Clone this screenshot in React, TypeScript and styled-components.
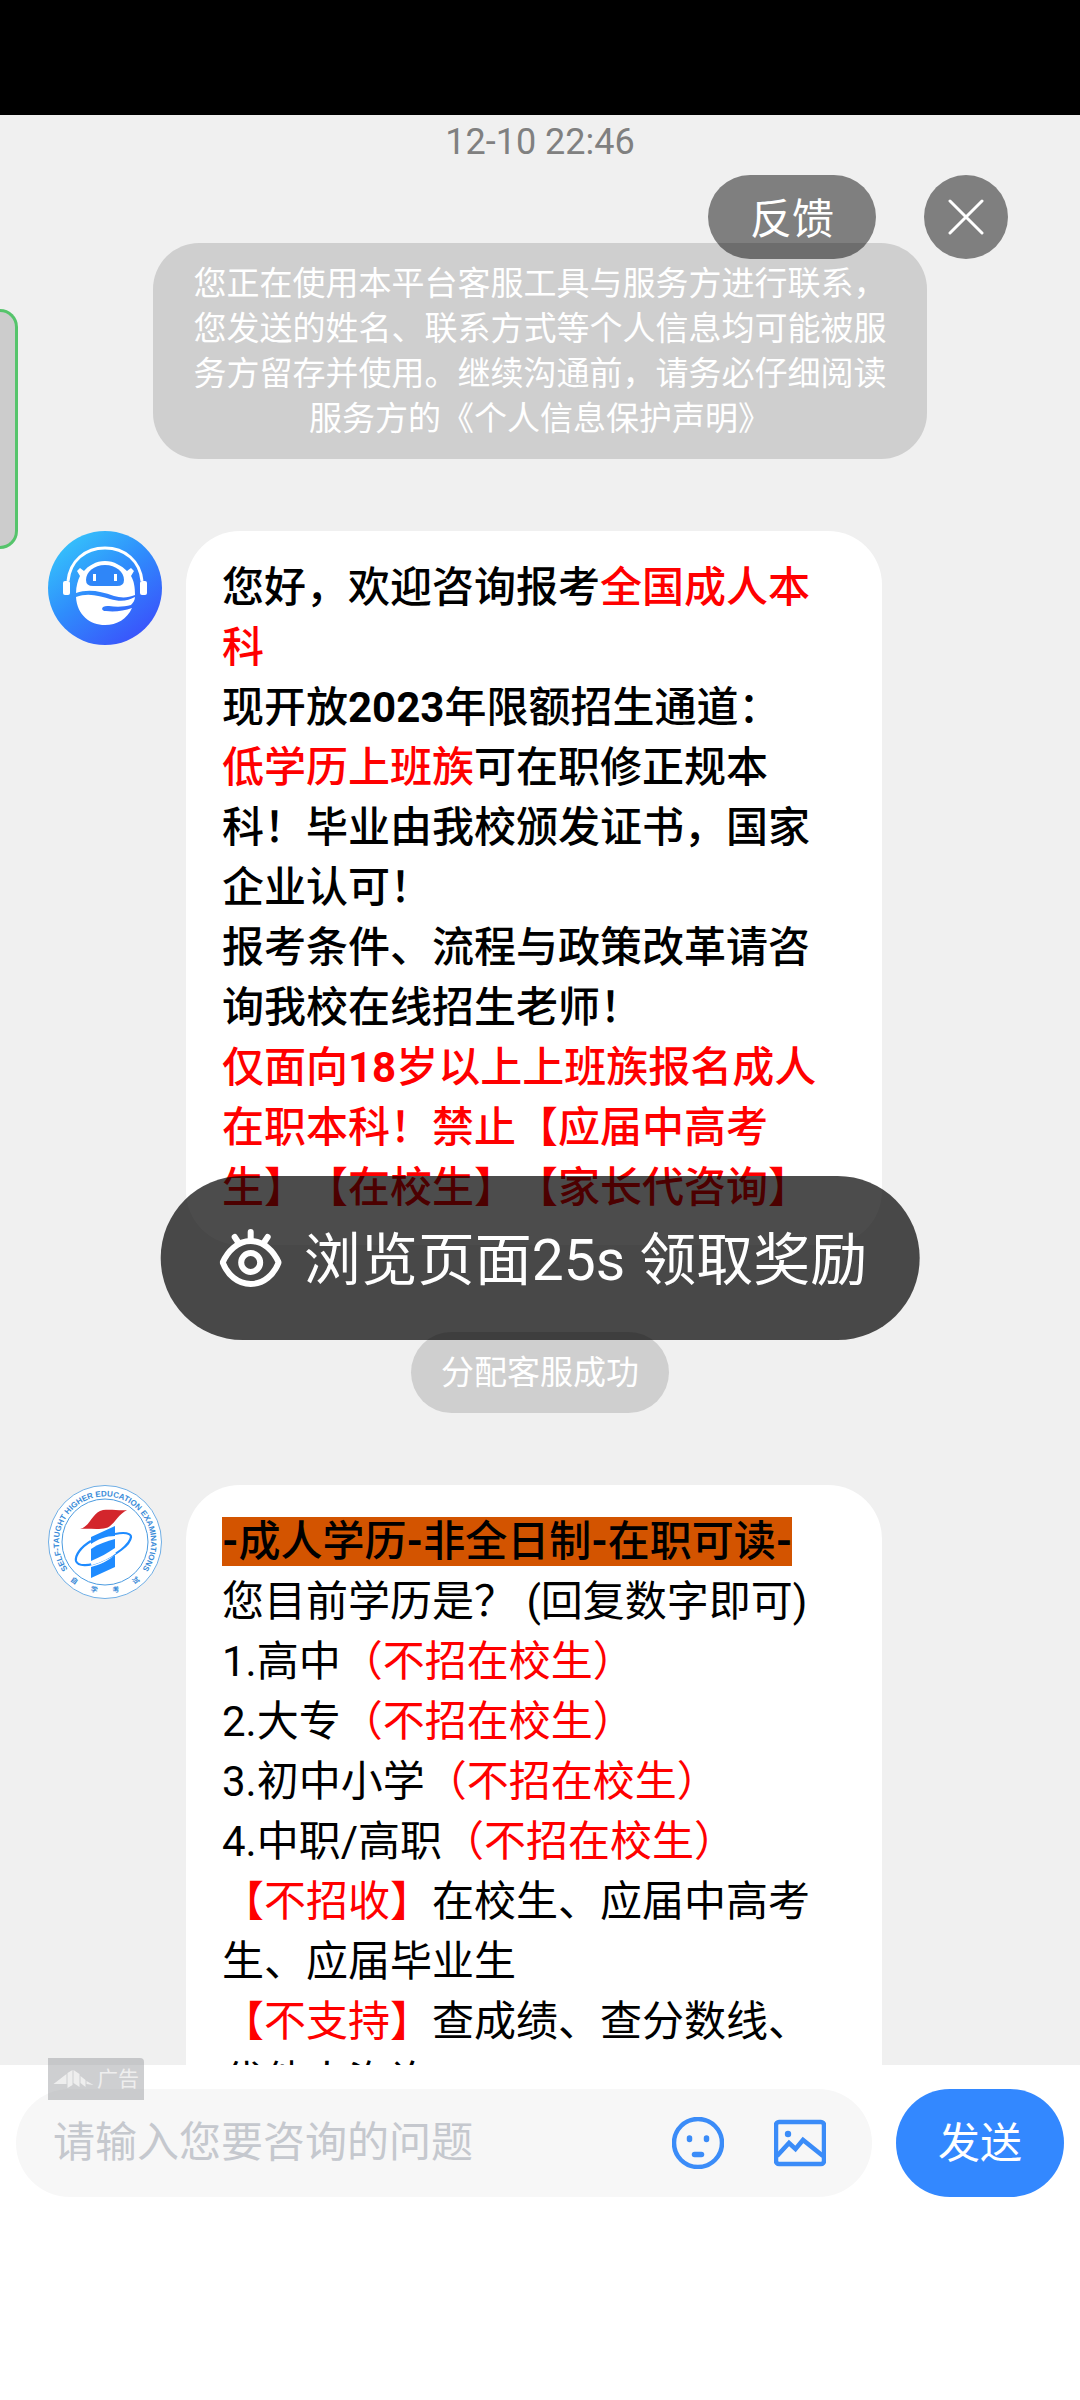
import React from "react";
import styled, { createGlobalStyle, css } from "styled-components";

const GlobalStyle = createGlobalStyle`
  * { box-sizing: border-box; }
  body {
    margin: 0;
    background: #fff;
    font-family: Roboto, "Noto Sans CJK SC", sans-serif;
    text-spacing-trim: space-all;
  }
  button, input { font-family: inherit; }
  button { border: 0; padding: 0; cursor: pointer; }
`;

const Screen = styled.div`
  position: relative;
  display: flex;
  flex-direction: column;
  height: 100vh;
  overflow: hidden;
  background: #fff;
`;

const StatusBar = styled.div`
  flex: none;
  height: 115px;
  background: #000;
`;

const Chat = styled.main`
  flex: 1;
  min-height: 0;
  overflow: hidden;
  display: flex;
  flex-direction: column;
  align-items: center;
  background: #f0f0f0;
`;

const Timestamp = styled.time`
  margin-top: 5px;
  font-size: 36px;
  line-height: 44px;
  color: #808080;
`;

const Notice = styled.p<{ $gap: number }>`
  flex: none;
  max-width: 774px;
  margin: ${(p) => p.$gap}px 0 0;
  padding: 18px 30px;
  border-radius: 46px;
  background: #cfcfcf;
  color: #fff;
  font-size: 33px;
  line-height: 45px;
  text-align: center;
`;

const Message = styled.article`
  flex: none;
  align-self: stretch;
  display: flex;
  align-items: flex-start;
  gap: 24px;
  margin-top: 72px;
  padding: 0 198px 0 48px;
`;

const Avatar = styled.svg`
  flex: none;
  width: 114px;
  height: 114px;
`;

const Bubble = styled.div<{ $strong?: boolean }>`
  flex: 1;
  padding: 27px 36px;
  border-radius: 54px;
  background: #fff;
  color: #000;
  font-size: 42px;
  line-height: 60px;
  ${(p) => p.$strong && css`font-weight: 500;`}
`;

const Line = styled.p`
  margin: 0;
`;

const Red = styled.span`
  color: #f00;
`;

const Heavy = styled.b`
  font-weight: 700;
`;

const Mark = styled.mark`
  background: #d35400;
  color: #000;
  font-weight: 500;
`;

const Composer = styled.form`
  flex: none;
  position: relative;
  display: flex;
  align-items: flex-start;
  gap: 24px;
  height: 335px;
  padding: 24px 16px;
  background: #fff;
`;

const Field = styled.div`
  flex: 1;
  min-width: 0;
  display: flex;
  align-items: center;
  gap: 50px;
  height: 108px;
  padding: 0 46px 0 37px;
  border-radius: 54px;
  background: #f7f7f7;
`;

const TextInput = styled.input`
  flex: 1;
  min-width: 0;
  padding: 0;
  border: 0;
  outline: 0;
  background: none;
  font-size: 42px;
  line-height: 60px;
  color: #000;
  &::placeholder { color: #c5c8ce; opacity: 1; }
`;

const IconButton = styled.button`
  display: flex;
  background: none;
  svg { width: 52px; height: 52px; }
`;

const SendButton = styled.button`
  flex: none;
  height: 108px;
  padding: 0 42px 8px;
  border-radius: 54px;
  background: #3388ff;
  color: #fff;
  font-size: 42px;
`;

const AdBadge = styled.span`
  position: absolute;
  left: 48px;
  top: -7px;
  display: flex;
  align-items: center;
  gap: 3px;
  height: 42px;
  padding: 0 5px;
  border-radius: 0 4px 0 0;
  background: rgba(152, 154, 158, 0.48);
  color: #eee;
  font-size: 21px;
  line-height: 24px;
  svg { width: 41px; height: 20px; }
`;

const TopActions = styled.div`
  position: absolute;
  top: 175px;
  right: 72px;
  display: flex;
  gap: 48px;
`;

const Pill = styled.button<{ $round?: boolean }>`
  display: flex;
  align-items: center;
  justify-content: center;
  width: ${(p) => (p.$round ? 84 : 168)}px;
  height: 84px;
  padding-top: ${(p) => (p.$round ? 0 : 5)}px;
  border-radius: 42px;
  background: rgba(0, 0, 0, 0.47);
  color: #fff;
  font-size: 42px;
  line-height: 60px;
  svg { width: 36px; height: 36px; }
`;

const SideTab = styled.aside`
  position: absolute;
  top: 309px;
  left: 0;
  width: 18px;
  height: 240px;
  border: 3px solid #55c46b;
  border-left: 0;
  border-radius: 0 18px 18px 0;
  background: #ccc;
`;

const Toast = styled.div`
  position: absolute;
  top: 1176px;
  left: 50%;
  transform: translateX(-50%);
  display: flex;
  align-items: center;
  gap: 22px;
  height: 164px;
  padding: 0 52px 0 59px;
  border-radius: 82px;
  background: rgba(0, 0, 0, 0.7);
  color: #fff;
  font-size: 57px;
  line-height: 80px;
  white-space: nowrap;
  svg { flex: none; width: 62px; height: 62px; }
`;

const ToastText = styled.span`
  padding-top: 6px;
`;

const RobotAvatar = () => (
  <Avatar viewBox="0 0 114 114" role="img" aria-label="客服">
    <defs>
      <linearGradient id="sky" x1="0.15" y1="0.1" x2="0.8" y2="0.95">
        <stop offset="0" stopColor="#35c0fb" />
        <stop offset="0.45" stopColor="#2f8dfc" />
        <stop offset="1" stopColor="#3a52fb" />
      </linearGradient>
    </defs>
    <circle cx="57" cy="57" r="57" fill="url(#sky)" />
    <g transform="translate(0 -1)">
      <path d="M20 51 C22 31 37 18 57 18 C77 18 92 31 94 51" fill="none" stroke="#fff" strokeWidth="3" />
      <rect x="15" y="51" width="7" height="14" rx="2" fill="#fff" />
      <rect x="92" y="51" width="7" height="14" rx="2" fill="#fff" />
      <path d="M29 41 L32 38 L36 41 C40 36 48 31 57 31 C66 31 74 36 79 41 L83 38 L86 41 L83 46 C86 51 87 57 87 65 C80 68 73 68 66 66 C52 61 40 59 28 63 C28 56 30 50 32 46 Z" fill="#fff" />
      <path d="M57 35 C68 35 76 42 76 50 Q76 56 69 56 L45 56 Q38 56 38 50 C38 42 46 35 57 35 Z" fill="#2f86f8" />
      <rect x="45" y="44" width="3" height="7" fill="#fff" />
      <rect x="66" y="44" width="3" height="7" fill="#fff" />
      <path d="M28 67 C40 62 52 66 62 69 C72 72 80 71 87 67 C87 70 85 73 83 75 C76 77 68 77 61 76 C53 75 52 81 58 81 C66 82 76 81 84 78 C79 89 69 95 57 95 C42 95 29 85 28 67 Z" fill="#fff" />
    </g>
  </Avatar>
);

const ExamAvatar = () => (
  <Avatar viewBox="0 0 114 114" role="img" aria-label="自学考试">
    <defs>
      <path id="ringTop" d="M21 86 A46 46 0 1 1 93 86" />
    </defs>
    <circle cx="57" cy="57" r="56.5" fill="#fff" stroke="#4b9be0" strokeWidth="0.8" />
    <circle cx="57" cy="57" r="43" fill="none" stroke="#4b9be0" strokeWidth="1" />
    <text fill="#3a8bd8" fontSize="8" fontWeight="700" fontFamily="Liberation Sans, sans-serif">
      <textPath href="#ringTop" startOffset="50%" textAnchor="middle">SELF-TAUGHT HIGHER EDUCATION EXAMINATIONS</textPath>
    </text>
    <g fill="#3a8bd8" fontSize="7" fontWeight="700" textAnchor="middle">
      <text x="26" y="98" transform="rotate(34 26 96)">自</text>
      <text x="46" y="107" transform="rotate(12 46 105)">学</text>
      <text x="68" y="107" transform="rotate(-12 68 105)">考</text>
      <text x="88" y="98" transform="rotate(-34 88 96)">试</text>
    </g>
    <path d="M32 44 C43 41 44 27 55 25 C64 24 72 26 79 25 C69 30 66 41 58 43 C50 45 40 43 32 44 Z" fill="#d3262c" />
    <path d="M43 52 L67 41 V51 C58 51 50 54 43 59 Z" fill="#1e8bff" />
    <path d="M43 64 C50 59 59 56 67 54 V63 C60 68 52 72 43 76 Z" fill="#1e8bff" />
    <path d="M43 82 C52 80 61 75 67 70 V82 L43 93 Z" fill="#1e8bff" />
    <path d="M43 56 C33 62 27 70 28 76 C30 82 42 81 53 76 C68 70 82 60 83 52 C83 48 76 47 67 49" fill="none" stroke="#1e8bff" strokeWidth="2.2" />
    <path d="M43 78.500 C53 76 62 71 67 67" fill="none" stroke="#fff" strokeWidth="3.500" />
  </Avatar>
);

const NoStudents = () => <Red>（不招在校生）</Red>;

export default function App() {
  return (
    <Screen>
      <GlobalStyle />
      <StatusBar />
      <Chat>
        <Timestamp>12-10 22:46</Timestamp>
        <Notice $gap={79}>
          您正在使用本平台客服工具与服务方进行联系，您发送的姓名、联系方式等个人信息均可能被服务方留存并使用。继续沟通前，请务必仔细阅读服务方的《个人信息保护声明》
        </Notice>
        <Message>
          <RobotAvatar />
          <Bubble $strong>
            <Line>您好，欢迎咨询报考<Red>全国成人本科</Red></Line>
            <Line>现开放<Heavy>2023</Heavy>年限额招生通道：</Line>
            <Line><Red>低学历上班族</Red>可在职修正规本科！毕业由我校颁发证书，国家企业认可！</Line>
            <Line>报考条件、流程与政策改革请咨询我校在线招生老师！</Line>
            <Line><Red>仅面向<Heavy>18</Heavy>岁以上上班族报名成人在职本科！禁止【应届中高考生】【在校生】【家长代咨询】</Red></Line>
          </Bubble>
        </Message>
        <Notice $gap={87}>分配客服成功</Notice>
        <Message>
          <ExamAvatar />
          <Bubble>
            <Line>
              <Mark>
                <Heavy>-</Heavy>成人学历<Heavy>-</Heavy>非全日制<Heavy>-</Heavy>在职可读<Heavy>-</Heavy>
              </Mark>
            </Line>
            <Line>您目前学历是？ (回复数字即可)</Line>
            <Line>1.高中<NoStudents /></Line>
            <Line>2.大专<NoStudents /></Line>
            <Line>3.初中小学<NoStudents /></Line>
            <Line>4.中职/高职<NoStudents /></Line>
            <Line><Red>【不招收】</Red>在校生、应届中高考生、应届毕业生</Line>
            <Line><Red>【不支持】</Red>查成绩、查分数线、代他人咨询</Line>
          </Bubble>
        </Message>
      </Chat>
      <Composer onSubmit={(e) => e.preventDefault()}>
        <Field>
          <TextInput aria-label="咨询内容" placeholder="请输入您要咨询的问题" />
          <IconButton type="button" aria-label="表情">
            <svg viewBox="0 0 52 52" fill="none" stroke="#3b8cf8" strokeLinecap="round">
              <circle cx="26" cy="26" r="24" strokeWidth="4.5" />
              <path d="M17.5 21 V22.5 M34.5 21 V22.5" strokeWidth="5.5" />
              <path d="M22.5 37.5 H29.5" strokeWidth="5.5" />
            </svg>
          </IconButton>
          <IconButton type="button" aria-label="图片">
            <svg viewBox="0 0 52 52" fill="none" stroke="#3b8cf8" strokeWidth="4.5">
              <rect x="2" y="5" width="48" height="42" rx="3" />
              <path d="M3 39 L15 26 L21.5 32 L29 23 L49 39" />
              <circle cx="14" cy="17" r="3.2" fill="#3b8cf8" stroke="none" />
            </svg>
          </IconButton>
        </Field>
        <SendButton type="submit">发送</SendButton>
        <AdBadge>
          <svg viewBox="0 0 40 20" fill="#eee">
            <path d="M0 15 L13 5 V15 Z M14 4 L19 1 V16 L14 19 Z M20 1 L26 5 V18 L20 14 Z M27 7 L32 11 V18 L27 14 Z M33 12 L40 16 L33 15 Z" />
          </svg>
          广告
        </AdBadge>
      </Composer>
      <TopActions>
        <Pill type="button">反馈</Pill>
        <Pill type="button" $round aria-label="关闭">
          <svg viewBox="0 0 36 36" stroke="#fff" strokeWidth="3" strokeLinecap="round">
            <path d="M2 2 L34 34 M34 2 L2 34" />
          </svg>
        </Pill>
      </TopActions>
      <SideTab />
      <Toast role="status">
        <svg viewBox="0 0 62 62" fill="none" stroke="#fff" strokeWidth="6" strokeLinecap="round">
          <path d="M3 35.5 C8 24 18 14 31 14 C44 14 54 24 59 35.5 C54 48 44 57 31 57 C18 57 8 48 3 35.5 Z" strokeLinejoin="round" />
          <circle cx="31" cy="35.5" r="9.5" />
          <path d="M31 5 V13 M15 10 L19 16 M48 10 L44 16" />
        </svg>
        <ToastText>浏览页面25s 领取奖励</ToastText>
      </Toast>
    </Screen>
  );
}
